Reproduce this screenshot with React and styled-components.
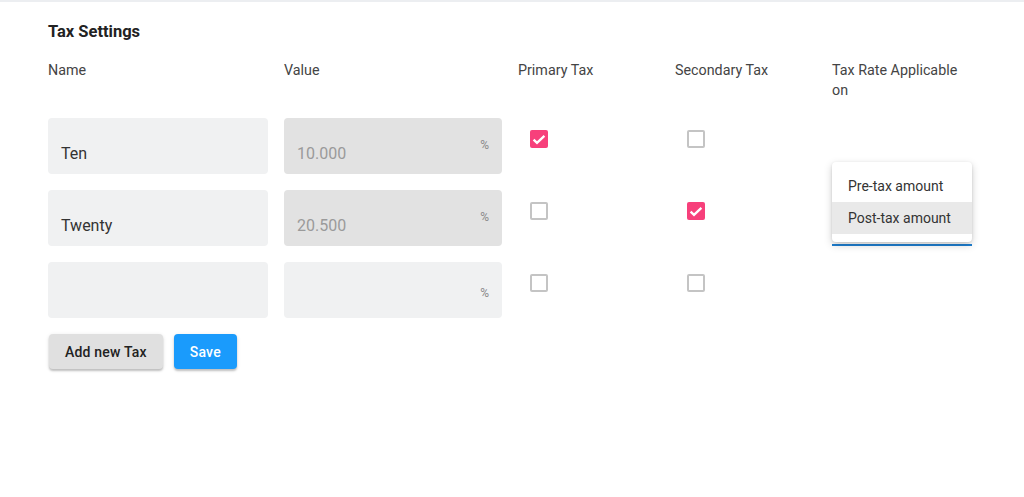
import React from 'react';
import styled, { createGlobalStyle } from 'styled-components';

const GlobalStyle = createGlobalStyle`
  body {
    margin: 0;
    background: #fff;
    font-family: Roboto, "Liberation Sans", Arial, sans-serif;
  }
`;

const Page = styled.div`
  border-top: 2px solid #eceef1;
  padding: 20px 48px 0;
  width: 1024px;
  height: 497px;
  box-sizing: border-box;
`;

const Title = styled.h2`
  margin: 0 0 18px;
  font-size: 16.5px;
  font-weight: 700;
  color: #222;
  line-height: 20px;
`;

const Grid = styled.div`
  display: grid;
  grid-template-columns: 220px 218px 141px 141px 140px;
  column-gap: 16px;
  row-gap: 16px;
`;

const HeaderCell = styled.div`
  font-size: 14.3px;
  color: #444;
  line-height: 20px;
  padding-bottom: 2px;
`;

const Field = styled.div`
  position: relative;
  height: 56px;
  background: ${p => (p.$disabled ? '#e2e2e2' : '#f0f1f2')};
  border-radius: 4px;
  box-sizing: border-box;
  padding: 25px 13px 0;
  font-size: 16px;
  line-height: 22px;
  color: ${p => (p.$disabled ? '#9a9a9a' : '#333')};
`;

const Adornment = styled.span`
  position: absolute;
  right: 13px;
  top: ${p => (p.$low ? 20 : 16)}px;
  font-size: 12px;
  color: #8a8a8a;
`;

const CheckCell = styled.div`
  padding: 12px 0 0 12px;
`;

const Box = styled.div`
  width: 18px;
  height: 18px;
  box-sizing: border-box;
  border-radius: 2px;
  border: ${p => (p.$checked ? 'none' : '2px solid #c4c4c4')};
  background: ${p => (p.$checked ? '#f7407b' : '#fff')};
  display: flex;
  align-items: center;
  justify-content: center;
`;

const SelectCell = styled.div`
  position: relative;
  width: 140px;
`;

const SelectField = styled.div`
  height: 54px;
  border-bottom: 2px solid #1f7fd1;
`;

const Menu = styled.ul`
  position: absolute;
  left: 0;
  top: -28px;
  width: 140px;
  margin: 0;
  padding: 8px 0;
  list-style: none;
  background: #fff;
  border-radius: 4px;
  box-shadow: 0 3px 8px rgba(0, 0, 0, 0.18), 0 1px 3px rgba(0, 0, 0, 0.12);
  z-index: 2;
`;

const MenuItem = styled.li`
  height: 32px;
  line-height: 32px;
  padding-left: 16px;
  font-size: 14px;
  color: #333;
  background: ${p => (p.$active ? '#e9e9e9' : 'transparent')};
`;

const Actions = styled.div`
  display: flex;
  gap: 11px;
  margin-top: 16px;
  padding-left: 1px;
`;

const Button = styled.button`
  height: 35px;
  padding: 0 16px;
  border: none;
  border-radius: 4px;
  font-family: inherit;
  font-size: 14px;
  font-weight: 500;
  letter-spacing: 0.2px;
  background: ${p => (p.$primary ? '#1a9bfc' : '#e0e0e0')};
  color: ${p => (p.$primary ? '#fff' : '#222')};
  box-shadow: 0 2px 2px rgba(0, 0, 0, 0.2), 0 1px 4px rgba(0, 0, 0, 0.1);
`;

const Check = () => (
  <svg width="14" height="11" viewBox="0 0 14 11">
    <path d="M1.6 5.6 L5 8.8 L12.4 1.8" fill="none" stroke="#fff" strokeWidth="2.3" />
  </svg>
);

const Checkbox = ({ checked }) => <Box $checked={checked}>{checked && <Check />}</Box>;

const rows = [
  { name: 'Ten', value: '10.000', primary: true, secondary: false },
  { name: 'Twenty', value: '20.500', primary: false, secondary: true, menu: true },
  { name: '', value: '', primary: false, secondary: false },
];

export default function App() {
  return (
    <Page>
      <GlobalStyle />
      <Title>Tax Settings</Title>
      <Grid>
        <HeaderCell>Name</HeaderCell>
        <HeaderCell>Value</HeaderCell>
        <HeaderCell>Primary Tax</HeaderCell>
        <HeaderCell>Secondary Tax</HeaderCell>
        <HeaderCell>Tax Rate Applicable on</HeaderCell>
        {rows.map((r, i) => (
          <React.Fragment key={i}>
            <Field>{r.name}</Field>
            <Field $disabled={r.value !== ''}>
              {r.value}
              <Adornment $low={r.value === ''}>%</Adornment>
            </Field>
            <CheckCell>
              <Checkbox checked={r.primary} />
            </CheckCell>
            <CheckCell>
              <Checkbox checked={r.secondary} />
            </CheckCell>
            <SelectCell>
              {r.menu && (
                <>
                  <SelectField />
                  <Menu>
                    <MenuItem>Pre-tax amount</MenuItem>
                    <MenuItem $active>Post-tax amount</MenuItem>
                  </Menu>
                </>
              )}
            </SelectCell>
          </React.Fragment>
        ))}
      </Grid>
      <Actions>
        <Button>Add new Tax</Button>
        <Button $primary>Save</Button>
      </Actions>
    </Page>
  );
}
